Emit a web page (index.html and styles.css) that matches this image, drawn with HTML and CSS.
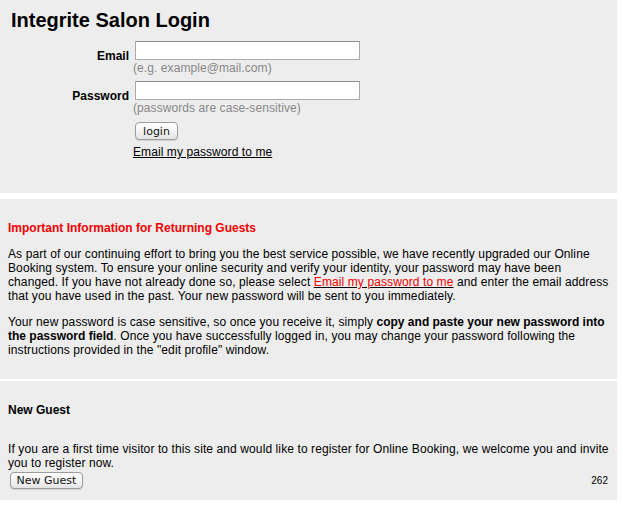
FILE: index.html
```html
<!DOCTYPE html>
<html>
<head>
<meta charset="utf-8">
<title>Integrite Salon Login</title>
<link rel="stylesheet" href="styles.css">
</head>
<body>
<div class="panel panel-login">
  <h1 class="title">Integrite Salon Login</h1>
  <form class="login-form">
    <label class="field-label" for="email">Email</label>
    <div class="field">
      <input class="text-input" id="email" type="text">
      <div class="hint">(e.g. example@mail.com)</div>
    </div>
    <label class="field-label" for="password">Password</label>
    <div class="field">
      <input class="text-input" id="password" type="password">
      <div class="hint">(passwords are case-sensitive)</div>
      <button class="btn btn-login" type="button">login</button>
      <a class="forgot-link" href="#">Email my password to me</a>
    </div>
  </form>
</div>

<div class="panel panel-info">
  <h3 class="info-heading">Important Information for Returning Guests</h3>
  <p class="info-text">As part of our continuing effort to bring you the best service possible, we have recently upgraded our Online Booking system. To ensure your online security and verify your identity, your password may have been changed. If you have not already done so, please select <a class="red-link" href="#">Email my password to me</a> and enter the email address that you have used in the past. Your new password will be sent to you immediately.</p>
  <p class="info-text">Your new password is case sensitive, so once you receive it, simply <b class="strong-text">copy and paste your new password into the password field</b>. Once you have successfully logged in, you may change your password following the instructions provided in the "edit profile" window.</p>
</div>

<div class="panel panel-guest">
  <h3 class="guest-heading">New Guest</h3>
  <p class="guest-text">If you are a first time visitor to this site and would like to register for Online Booking, we welcome you and invite you to register now.</p>
  <div class="guest-actions">
    <button class="btn btn-guest" type="button">New Guest</button>
    <span class="counter">262</span>
  </div>
</div>
</body>
</html>
```

FILE: styles.css
```css
html, body {
  margin: 0;
  padding: 0;
  background: #ffffff;
}

body {
  font-family: "Liberation Sans", Arial, Helvetica, sans-serif;
  font-size: 12px;
  line-height: 14px;
  color: #000;
}

.panel {
  width: 617px;
  background: #ededed;
  box-sizing: border-box;
}

/* ---------- login panel ---------- */
.panel-login {
  height: 193px;
  padding: 9px 0 0 0;
}

.title {
  margin: 0;
  padding-left: 11px;
  font-size: 20px;
  line-height: 23px;
  font-weight: bold;
}

.login-form {
  margin-top: 9px;
  display: grid;
  grid-template-columns: 129px auto;
  column-gap: 4px;
  row-gap: 6px;
  align-items: start;
}

.field-label {
  text-align: right;
  font-weight: bold;
  padding-top: 8px;
}

.field {
  display: flex;
  flex-direction: column;
  align-items: flex-start;
}

.text-input {
  box-sizing: border-box;
  width: 225px;
  height: 19px;
  margin: 0 0 0 2px;
  padding: 1px 3px;
  border: 1px solid #a9a9a9;
  border-top-color: #8e8e8e;
  background: #fff;
  font-family: "Liberation Sans", Arial, sans-serif;
  font-size: 12px;
}

.hint {
  margin-top: 1px;
  color: #888888;
  letter-spacing: 0.08px;
}

.btn {
  box-sizing: border-box;
  margin: 0;
  padding: 0;
  border: 1px solid #9c9c9c;
  border-radius: 4px;
  background: linear-gradient(#ffffff, #f4f4f4 50%, #e4e4e4);
  font-family: "DejaVu Sans", "Liberation Sans", sans-serif;
  font-size: 11px;
  color: #111;
  box-shadow: 0 1px 1px rgba(0,0,0,0.12);
}

.btn-login {
  width: 43px;
  height: 18px;
  margin: 7px 0 0 2px;
  line-height: 15px;
}

.forgot-link {
  margin-top: 5px;
  color: #000;
  text-decoration: underline;
  letter-spacing: 0.08px;
}

/* ---------- info panel ---------- */
.panel-info {
  margin-top: 6px;
  padding: 10px 6px 10px 8px;
}

.info-heading {
  margin: 12px 0;
  font-size: 12px;
  font-weight: bold;
  color: #f20000;
}

.info-text {
  margin: 12px 0;
  letter-spacing: 0.1px;
}

.strong-text {
  letter-spacing: 0;
}

.red-link {
  color: #f20000;
  text-decoration: underline;
  text-decoration-color: #000;
}

/* ---------- guest panel ---------- */
.panel-guest {
  margin-top: 2px;
  height: 119px;
  padding: 10px 2px 0 8px;
}

.guest-heading {
  margin: 12px 0 25px 0;
  font-size: 12px;
  font-weight: bold;
}

.guest-text {
  margin: 0;
  letter-spacing: 0.1px;
}

.guest-actions {
  margin-top: 2px;
  display: flex;
  justify-content: space-between;
  align-items: center;
}

.btn-guest {
  width: 73px;
  height: 17px;
  margin-left: 2px;
  line-height: 14px;
}

.counter {
  margin-right: 7px;
  font-size: 10px;
}
```
